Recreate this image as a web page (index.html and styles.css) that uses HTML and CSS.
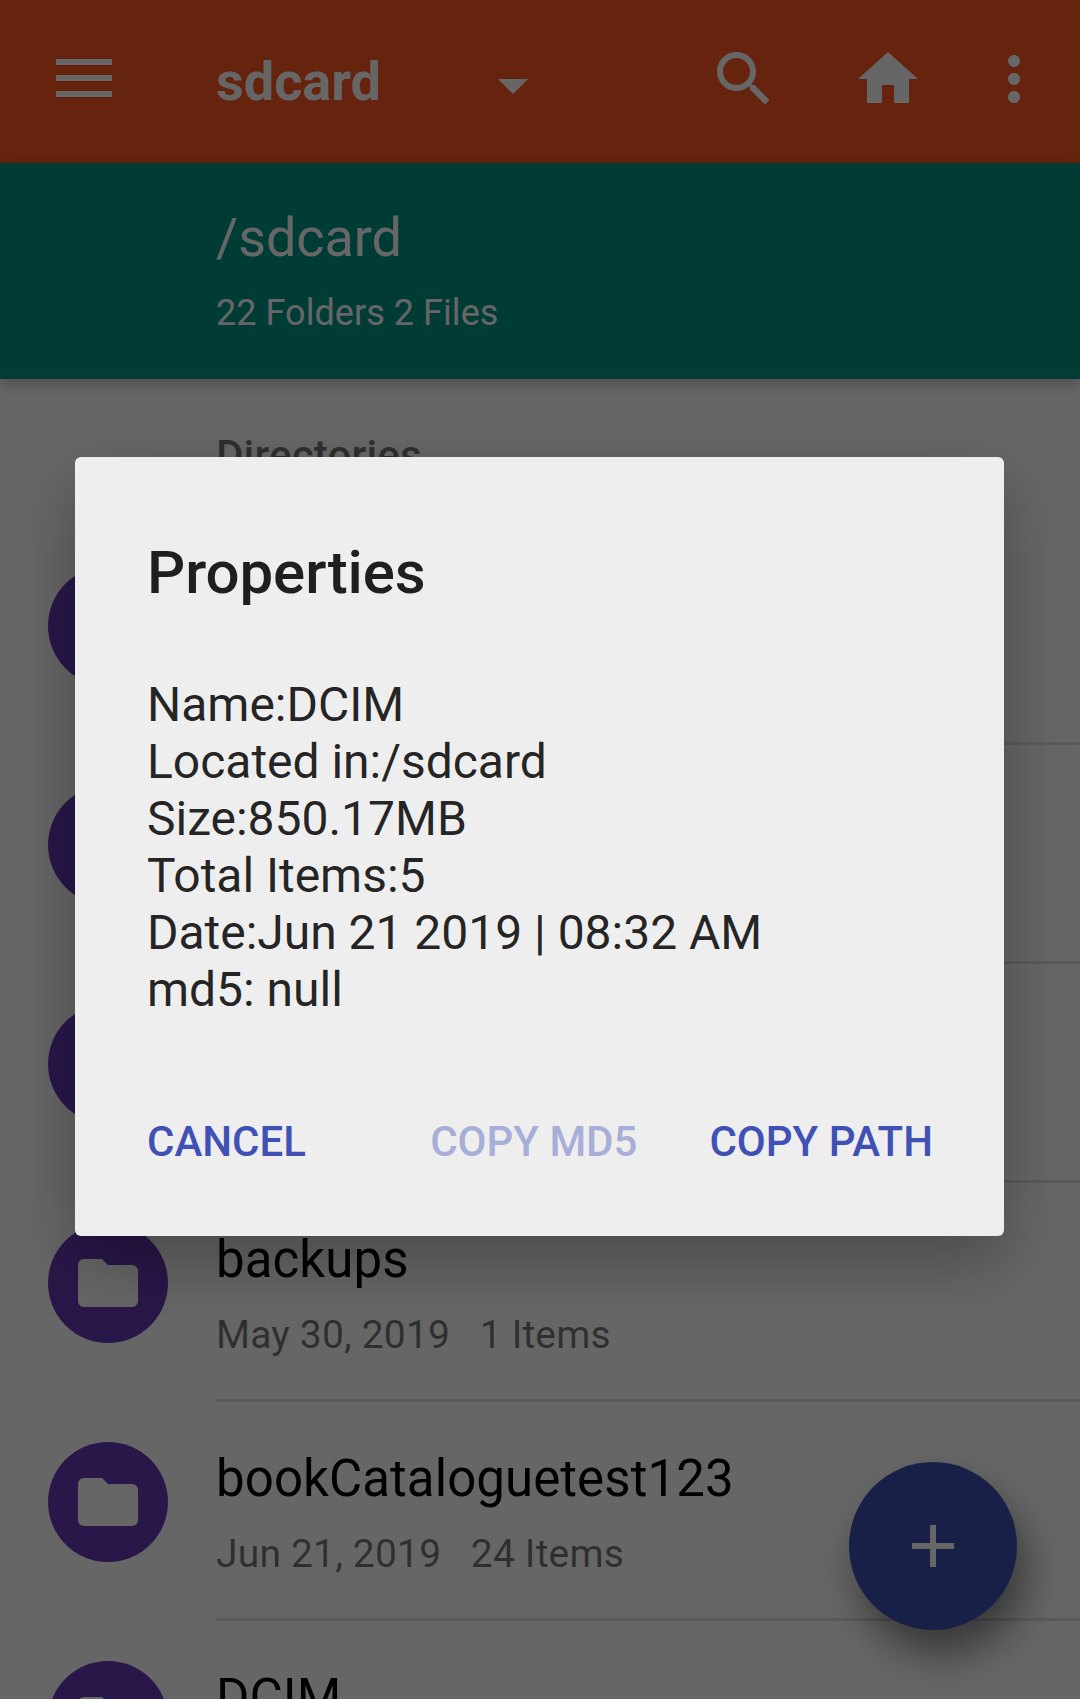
FILE: index.html
```html
<!DOCTYPE html>
<html lang="en">
<head>
<meta charset="utf-8">
<title>sdcard</title>
<link rel="stylesheet" href="styles.css">
</head>
<body>
<svg class="defs" aria-hidden="true">
  <symbol id="folder" viewBox="0 0 24 24"><path d="M10 4H4c-1.1 0-1.99.9-1.99 2L2 18c0 1.1.9 2 2 2h16c1.1 0 2-.9 2-2V8c0-1.1-.9-2-2-2h-8l-2-2z"/></symbol>
</svg>
<div class="screen">
  <header class="appbar">
    <svg class="menu" viewBox="0 0 56 38"><path d="M0 0h56v6H0zM0 16h56v6H0zM0 32h56v6H0z"/></svg>
    <h1 class="appbar-title">sdcard</h1>
    <svg class="icon caret" viewBox="0 0 24 24"><path d="M7 10l5 5 5-5z"/></svg>
    <div class="actions">
      <svg class="icon" viewBox="0 0 24 24"><path d="M15.5 14h-.79l-.28-.27C15.41 12.59 16 11.11 16 9.5 16 5.91 13.09 3 9.5 3S3 5.91 3 9.5 5.91 16 9.5 16c1.61 0 3.09-.59 4.23-1.57l.27.28v.79l5 4.99L20.49 19l-4.99-5zm-6 0C7.01 14 5 11.99 5 9.5S7.01 5 9.5 5 14 7.01 14 9.5 11.99 14 9.5 14z"/></svg>
      <svg class="icon home" viewBox="0 0 24 24"><path d="M10 20v-6h4v6h5v-8h3L12 3 2 12h3v8z"/></svg>
      <svg class="icon more" viewBox="0 0 24 24"><path d="M12 8c1.1 0 2-.9 2-2s-.9-2-2-2-2 .9-2 2 .9 2 2 2zm0 2c-1.1 0-2 .9-2 2s.9 2 2 2 2-.9 2-2-.9-2-2-2zm0 6c-1.1 0-2 .9-2 2s.9 2 2 2 2-.9 2-2-.9-2-2-2z"/></svg>
    </div>
  </header>
  <section class="pathbar">
    <div class="path">/sdcard</div>
    <div class="counts">22 Folders 2 Files</div>
  </section>
  <main class="list">
    <h2 class="section">Directories</h2>
    <div class="row"><span class="avatar"><svg class="icon"><use href="#folder"/></svg></span><div class="info"></div></div>
    <div class="row"><span class="avatar"><svg class="icon"><use href="#folder"/></svg></span><div class="info"></div></div>
    <div class="row"><span class="avatar"><svg class="icon"><use href="#folder"/></svg></span><div class="info"></div></div>
    <div class="row"><span class="avatar"><svg class="icon"><use href="#folder"/></svg></span><div class="info"><div class="name">backups</div><div class="meta">May 30, 2019   1 Items</div></div></div>
    <div class="row"><span class="avatar"><svg class="icon"><use href="#folder"/></svg></span><div class="info"><div class="name">bookCataloguetest123</div><div class="meta">Jun 21, 2019   24 Items</div></div></div>
    <div class="row"><span class="avatar"><svg class="icon"><use href="#folder"/></svg></span><div class="info"><div class="name">DCIM</div></div></div>
  </main>
  <div class="fab"><svg class="icon" viewBox="0 0 24 24"><path d="M19 13h-6v6h-2v-6H5v-2h6V5h2v6h6v2z"/></svg></div>
  <div class="scrim">
    <div class="dialog" role="dialog">
      <h2 class="dialog-title">Properties</h2>
      <div class="dialog-text">Name:DCIM<br>Located in:/sdcard<br>Size:850.17MB<br>Total Items:5<br>Date:Jun 21 2019 | 08:32 AM<br>md5: null</div>
      <div class="buttons">
        <span class="button cancel">CANCEL</span>
        <span class="button disabled">COPY MD5</span>
        <span class="button">COPY PATH</span>
      </div>
    </div>
  </div>
</div>
</body>
</html>
```
FILE: styles.css
```css
* { box-sizing: border-box; margin: 0; }
body { font-family: Roboto, sans-serif; background: #fff; overflow: hidden; }
.defs { display: none; }
.screen { position: relative; width: 1080px; height: 1699px; overflow: hidden; display: flex; flex-direction: column; }
.icon { display: block; width: 72px; height: 72px; fill: currentColor; flex: none; }

.appbar { height: 163px; flex: none; background: #ff5722; color: #fff; display: flex; align-items: flex-start; padding: 43px 30px 0 56px; }
.menu { width: 56px; height: 38px; margin-top: 16px; fill: currentColor; }
.appbar-title { margin: 7px 0 0 104px; width: 261px; font-size: 54px; line-height: 64px; font-weight: 700; }
.caret { margin-top: 6px; }
.actions { display: flex; margin-left: auto; }
.home { margin-left: 72px; }
.more { margin-left: 54px; }

.pathbar { position: relative; z-index: 1; height: 216px; flex: none; padding: 43px 0 0 216px; background: #009688; color: #fff; box-shadow: 0 5px 15px rgba(0, 0, 0, .27); }
.path { font-size: 54px; line-height: 64px; letter-spacing: -.1px; }
.counts { margin-top: 18px; font-size: 36px; line-height: 50px; letter-spacing: .05px; }

.list { flex: none; }
.section { height: 147px; padding: 52px 0 0 216px; font-size: 42px; line-height: 50px; font-weight: 500; letter-spacing: .15px; color: rgba(0, 0, 0, .54); }
.row { display: flex; height: 219px; padding-left: 48px; }
.avatar { width: 120px; height: 120px; margin: 40px 48px 0 0; flex: none; border-radius: 50%; background: #673ab7; color: #fff; display: flex; align-items: center; justify-content: center; }
.info { flex: 1; padding-top: 47px; border-bottom: 3px solid rgba(0, 0, 0, .12); }
.name { font-size: 51px; line-height: 60px; letter-spacing: .08px; color: #000; }
.meta { margin-top: 20px; font-size: 39px; line-height: 50px; letter-spacing: .18px; white-space: pre; color: rgba(0, 0, 0, .54); }

.fab { position: absolute; left: 849px; top: 1462px; width: 168px; height: 168px; border-radius: 50%; background: #3f51b5; color: #fff; display: flex; align-items: center; justify-content: center; box-shadow: 9px 24px 42px rgba(0, 0, 0, .46); }

.scrim { position: absolute; inset: 0; z-index: 2; background: rgba(0, 0, 0, .6); padding: 457px 76px 0 75px; }
.dialog { height: 779px; padding: 81px 71px 0 72px; border-radius: 6px; background: #eee; box-shadow: 0 26px 64px rgba(0, 0, 0, .27); color: rgba(0, 0, 0, .87); }
.dialog-title { font-size: 60px; line-height: 70px; font-weight: 500; letter-spacing: -.1px; }
.dialog-text { margin-top: 68px; font-size: 48px; line-height: 57px; letter-spacing: -.02px; }
.buttons { display: flex; gap: 72px; margin-top: 99px; }
.button { font-size: 42px; line-height: 50px; font-weight: 500; color: #3f51b5; white-space: nowrap; }
.cancel { margin-right: auto; }
.disabled { opacity: .4; }
```
